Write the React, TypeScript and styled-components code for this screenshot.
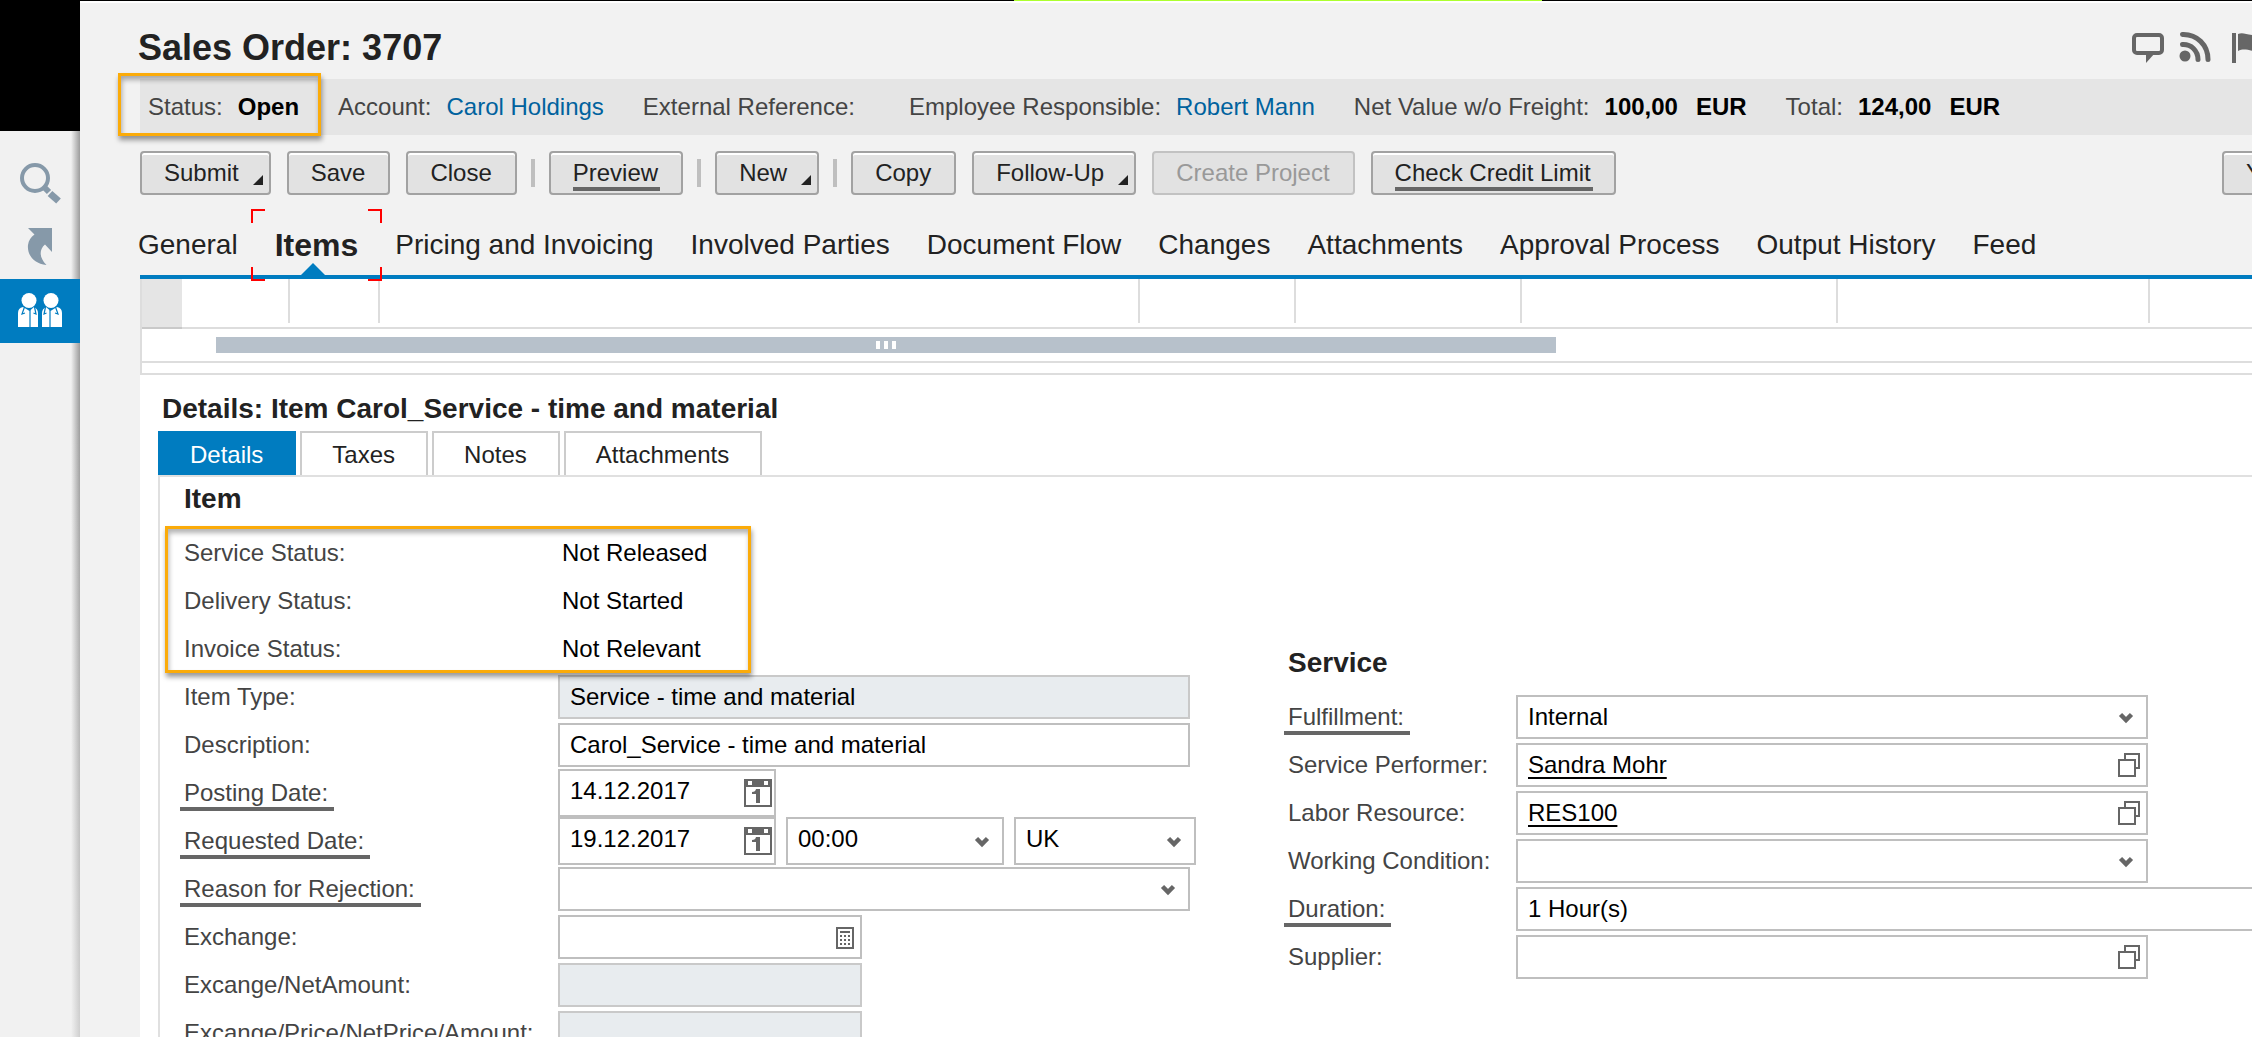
import React, { useState } from "react";
import styled, { createGlobalStyle, css } from "styled-components";

const GlobalStyle = createGlobalStyle`
  *, *::before, *::after { box-sizing: border-box; }
  html, body { margin: 0; padding: 0; background: #f2f2f2; }
  body, button, input, select {
    font-family: "Liberation Sans", Arial, Helvetica, sans-serif;
    font-size: 24px;
    line-height: 28px;
  }
`;

/* ---------- shell ---------- */

const Shell = styled.div`
  display: flex;
  flex-direction: column;
  height: 100vh;
  overflow: hidden;
  color: #222;
`;

const LoadStrip = styled.div`
  flex: none;
  display: grid;
  grid-template-columns: 1014fr 528fr 710fr;
  height: 1px;
  background: #000;
`;

const LoadProgress = styled.div`
  grid-column: 2;
  background: #adff2f;
`;

const Body = styled.div`
  flex: 1;
  display: flex;
  min-height: 0;
`;

const Sidebar = styled.nav`
  flex: none;
  display: flex;
  flex-direction: column;
  width: 80px;
  background:
    linear-gradient(to bottom, rgba(241, 241, 241, 0) 40%, rgba(241, 241, 241, 0.6) 100%),
    linear-gradient(to left, #9c9c9c, #f1f1f1 9px);
`;

const BrandBlock = styled.div`
  height: 130px;
  margin-bottom: 20px;
  background: #000;
`;

const SideButton = styled.button<{ $active?: boolean }>`
  display: flex;
  align-items: center;
  justify-content: center;
  height: 64px;
  padding: 0;
  border: 0;
  background: ${(p) => (p.$active ? "#007cc0" : "transparent")};
  cursor: pointer;
`;

const Main = styled.main`
  flex: 1;
  min-width: 0;
  display: flex;
  flex-direction: column;
  padding-left: 60px;
  border-top: 2px solid #fff;
  background: #f2f2f2;
  overflow: hidden;
`;

/* ---------- header ---------- */

const TitleBar = styled.header`
  flex: none;
  display: flex;
  justify-content: space-between;
  height: 76px;
  padding: 24px 0 0;
  margin-left: -2px;
`;

const PageTitle = styled.h1`
  margin: 0;
  font-size: 36px;
  line-height: 42px;
  font-weight: bold;
`;

const HeaderTools = styled.div`
  display: flex;
  gap: 18px;
  margin-right: -12px;
`;

const ToolButton = styled.button`
  flex: none;
  display: flex;
  width: 32px;
  height: 40px;
  padding: 4px 0 0;
  border: 0;
  background: none;
`;

const InfoBar = styled.section`
  flex: none;
  display: flex;
  align-items: center;
  gap: 39px;
  height: 56px;
  padding-left: 8px;
  background: #e5e5e5;
  white-space: nowrap;
`;

const InfoGroup = styled.div`
  position: relative;
  display: flex;
  gap: 15px;
  color: #444;
`;

const InfoLink = styled.a`
  color: #00629e;
  text-decoration: none;
`;

const InfoValue = styled.strong`
  color: #000;

  & + & { margin-left: 3px; }
`;

const Callout = styled.span<{ $box: "status" | "rows" }>`
  position: absolute;
  z-index: 2;
  border: 3px solid #fbab09;
  box-shadow: 1px 4px 5px rgba(0, 0, 0, 0.4), inset 1px 4px 5px rgba(0, 0, 0, 0.3);
  pointer-events: none;
  ${(p) =>
    p.$box === "status"
      ? css`
          inset: -20px -22px -15px -30px;
        `
      : css`
          top: -3px;
          left: -19px;
          width: 586px;
          bottom: 0;
        `}
`;

/* ---------- toolbar ---------- */

const Toolbar = styled.div`
  flex: none;
  display: flex;
  align-items: center;
  gap: 16px;
  padding-top: 16px;
  white-space: nowrap;
`;

const ActionButton = styled.button<{ $menu?: boolean; $offEdge?: boolean }>`
  position: relative;
  flex: none;
  height: 44px;
  padding: 0 ${(p) => (p.$menu ? 30 : 23)}px 0 22px;
  border: 2px solid #a2a2a2;
  border-radius: 4px;
  background: #e2e2e2;
  box-shadow: inset 0 2px 0 #fff;
  color: #222;
  cursor: pointer;
  ${(p) => p.$offEdge && "margin: 0 -35px 0 auto;"}

  &:disabled {
    border-color: #c2c2c2;
    box-shadow: none;
    color: #999;
    cursor: default;
  }
`;

const MenuCorner = styled.span`
  position: absolute;
  right: 6px;
  bottom: 8px;
  border-left: 10px solid transparent;
  border-bottom: 10px solid #222;
`;

const Marked = styled.span`
  display: block;
  margin: 0 -2px -4px 0;
  padding-right: 2px;
  border-bottom: 4px solid #666;
`;

const Divider = styled.span`
  width: 4px;
  height: 28px;
  margin: 0 -2px;
  background: #bfbfbf;
`;

/* ---------- work tabs ---------- */

const WorkTabs = styled.nav`
  flex: none;
  display: flex;
  align-items: center;
  gap: 37px;
  height: 84px;
  padding-top: 20px;
  border-bottom: 4px solid #007cc0;
  white-space: nowrap;
`;

const WorkTab = styled.button<{ $active?: boolean }>`
  position: relative;
  height: 60px;
  padding: 0;
  border: 0;
  background: none;
  color: #222;
  font-size: ${(p) => (p.$active ? 32 : 28)}px;
  font-weight: ${(p) => (p.$active ? "bold" : "normal")};
  line-height: 36px;
  cursor: pointer;

  &:first-child { margin-left: -2px; }
`;

const TabPointer = styled.span`
  position: absolute;
  bottom: 0;
  left: 26px;
  border: 12px solid transparent;
  border-top: 0;
  border-bottom-color: #007cc0;
`;

const FocusCorners = styled.span`
  position: absolute;
  inset: -6px -24px;
  --c: #f00;
  background:
    linear-gradient(var(--c) 0 0) 0 0 / 14px 2px,
    linear-gradient(var(--c) 0 0) 0 0 / 2px 14px,
    linear-gradient(var(--c) 0 0) 100% 0 / 14px 2px,
    linear-gradient(var(--c) 0 0) 100% 0 / 2px 14px,
    linear-gradient(var(--c) 0 0) 0 100% / 14px 2px,
    linear-gradient(var(--c) 0 0) 0 100% / 2px 14px,
    linear-gradient(var(--c) 0 0) 100% 100% / 14px 2px,
    linear-gradient(var(--c) 0 0) 100% 100% / 2px 14px;
  background-repeat: no-repeat;
`;

/* ---------- item list ---------- */

const Sheet = styled.div`
  flex: 1;
  display: flex;
  flex-direction: column;
  background: #fff;
`;

const ListFrame = styled.div`
  border-left: 2px solid #ddd;
  border-bottom: 2px solid #ddd;
`;

const ItemTable = styled.table`
  width: 100%;
  table-layout: fixed;
  border-spacing: 0;
`;

const ItemCell = styled.td<{ $width?: number }>`
  width: ${(p) => (p.$width ? `${p.$width}px` : "auto")};
  height: 50px;
  padding: 0;
  border-bottom: 2px solid #ddd;
  background: ${(p) => (p.$width ? "linear-gradient(#ddd, #ddd) right top / 2px 44px no-repeat" : "none")};
`;

const SelectorCell = styled.td`
  width: 40px;
  padding: 0;
  border-bottom: 2px solid #c9c9c9;
  background: #e5e5e5;
`;

const ScrollTrack = styled.div`
  height: 34px;
  padding: 8px 0 8px 74px;
  border-bottom: 2px solid #ddd;
  margin-bottom: 10px;
`;

const ScrollThumb = styled.div`
  display: flex;
  justify-content: center;
  align-items: center;
  gap: 4px;
  width: 66%;
  max-width: 1340px;
  height: 16px;
  background: #b7c1cb;
`;

const Grip = styled.span`
  width: 4px;
  height: 8px;
  background: #fff;
`;

/* ---------- details ---------- */

const DetailArea = styled.section`
  flex: 1;
  display: flex;
  flex-direction: column;
  padding: 18px 0 0 18px;
`;

const DetailTitle = styled.h2`
  margin: 0 0 6px 4px;
  font-size: 28px;
  line-height: 32px;
`;

const SubTabs = styled.div`
  display: flex;
  gap: 4px;
`;

const SubTab = styled.button<{ $active?: boolean }>`
  height: 44px;
  padding: ${(p) => (p.$active ? "4px 33px 0 32px" : "2px 31px 0 30px")};
  border: solid ${(p) => (p.$active ? "#007cc0" : "#ccc")};
  border-width: ${(p) => (p.$active ? "0" : "2px 2px 0")};
  background: ${(p) => (p.$active ? "#007cc0" : "#fff")};
  color: ${(p) => (p.$active ? "#fff" : "#222")};
  cursor: pointer;
`;

const Panel = styled.div`
  flex: 1;
  display: grid;
  grid-template-columns: minmax(0, 1104fr) minmax(0, 964fr);
  align-items: start;
  padding: 6px 0 0 24px;
  border-top: 2px solid #e0e0e0;
  border-left: 2px solid #e0e0e0;
`;

const FormColumn = styled.div<{ $lowered?: boolean }>`
  padding-top: ${(p) => (p.$lowered ? 164 : 0)}px;
`;

const FormHeading = styled.h3`
  margin: 0 0 14px;
  font-size: 28px;
  line-height: 32px;
`;

const StatusRows = styled.div`
  position: relative;
`;

const Row = styled.div<{ $narrow?: boolean }>`
  display: grid;
  grid-template-columns: ${(p) => (p.$narrow ? 228 : 374)}px minmax(0, 1fr);
  align-items: center;
  height: 48px;
`;

const FieldLabel = styled.label<{ $marked?: boolean }>`
  justify-self: start;
  color: #444;
  white-space: nowrap;
  ${(p) =>
    p.$marked &&
    css`
      margin: 0 0 -4px -4px;
      padding: 0 6px 0 4px;
      border-bottom: 4px solid #666;
    `}
`;

const StatusText = styled.output`
  padding-left: 4px;
  color: #000;
`;

const Controls = styled.div`
  display: flex;
  gap: 10px;
`;

type Size = "full" | "amount" | "date" | "zone" | "stretch";
const widths: Record<Size, string> = {
  full: "width: 632px;",
  amount: "width: 304px;",
  date: "width: 218px;",
  zone: "width: 182px;",
  stretch: "width: auto; margin-right: -2px;",
};

const FieldBox = styled.div<{ $size: Size }>`
  position: relative;
  ${(p) => widths[p.$size]}
`;

const fieldLook = css<{ $tall?: boolean }>`
  display: block;
  width: 100%;
  height: ${(p) => (p.$tall ? 48 : 44)}px;
  margin: 0;
  padding: 0 40px ${(p) => (p.$tall ? 4 : 0)}px 10px;
  border: 2px solid #bfbfbf;
  border-radius: 0;
  background: #fff;
  color: #000;
  outline: 0;
`;

const TextField = styled.input<{ $tall?: boolean; $linked?: boolean }>`
  ${fieldLook}
  ${(p) =>
    p.$linked &&
    "text-decoration: underline; text-decoration-thickness: 2px; text-underline-offset: 4px; text-decoration-skip-ink: none;"}

  &:read-only {
    border-color: #c9c9c9;
    background: #e8ecef;
  }
`;

const SelectField = styled.select<{ $tall?: boolean }>`
  ${fieldLook}
  appearance: none;
`;

const FieldIcon = styled.span<{ $right: number }>`
  position: absolute;
  top: 0;
  bottom: 0;
  right: ${(p) => p.$right}px;
  display: flex;
  align-items: center;
  pointer-events: none;
`;

const FieldButton = styled.button<{ $right: number }>`
  position: absolute;
  top: 0;
  bottom: 0;
  right: ${(p) => p.$right}px;
  display: flex;
  align-items: center;
  padding: 0;
  border: 0;
  background: none;
`;

/* ---------- icons ---------- */

const SearchIcon = () => (
  <svg width="46" height="46" viewBox="17 160 46 46" fill="none" stroke="#8699a9">
    <circle cx="35" cy="178" r="13" strokeWidth="4" />
    <path d="M44.500 187.500L49 192" strokeWidth="6" />
    <path d="M50 193.500L58.500 201" strokeWidth="7" />
  </svg>
);

const ShortcutIcon = () => (
  <svg width="40" height="42" viewBox="20 227 40 42" fill="#8699a9">
    <path d="M28 229H52V253L45 245.500C39.500 250 38.500 258 46.500 266C33 264.500 27 255 28 246C28.500 241.500 31 238 34.500 235.500Z" />
  </svg>
);

const PeopleIcon = () => (
  <svg width="46" height="38" viewBox="17 292 46 38">
    {["", "translate(80 0) scale(-1 1)"].map((side) => (
      <g key={side} transform={side}>
        <circle cx="29" cy="300.500" r="7.500" fill="#fff" />
        <path d="M18 327V313Q18 308 23 307L29.500 311L34 307Q38 309 38 313V327Z" fill="#fff" />
        <path d="M24.500 307L22 314L25 313M34.500 307L36 314L33.500 313M30 310V327" stroke="#007cc0" strokeWidth="1.200" fill="none" />
      </g>
    ))}
  </svg>
);

const CommentIcon = () => (
  <svg width="32" height="32" viewBox="0 0 32 32">
    <rect x="2" y="4" width="28" height="18" rx="3" fill="none" stroke="#666" strokeWidth="4" />
    <path d="M14 22V32L23 22Z" fill="#666" />
  </svg>
);

const FeedIcon = () => (
  <svg width="32" height="32" viewBox="2 0 32 32" fill="none" stroke="#666" strokeWidth="5" strokeLinecap="round" overflow="visible">
    <circle cx="5" cy="25" r="5.500" fill="#666" stroke="none" />
    <path d="M2.500 13.500C11 13 18 19.500 18 28.500M2.500 3.500C17 3 28 14 28 28.500" />
  </svg>
);

const FlagIcon = () => (
  <svg width="32" height="32" viewBox="0 0 32 32" fill="#666">
    <rect x="0" y="2" width="4" height="30" />
    <path d="M6 3C12 0 17 6 32 4V20C20 22 14 16 6 20Z" />
  </svg>
);

const Chevron = () => (
  <svg width="16" height="14" viewBox="0 0 16 14">
    <path d="M2.500 4.500L8 10L13.500 4.500" fill="none" stroke="#666" strokeWidth="4.500" />
  </svg>
);

const CalendarIcon = () => (
  <svg width="28" height="28" viewBox="0 0 28 28">
    <path d="M0 0H28V28H0ZM2 8V26H26V8ZM4 2V6H8V2ZM20 2V6H24V2Z" fill="#666" fillRule="evenodd" />
    <path d="M12 10H16V24H12V15H8V13Q11.500 13 12 10Z" fill="#666" />
  </svg>
);

const CalculatorIcon = () => (
  <svg width="18" height="24" viewBox="0 -2 18 24" fill="#666">
    <path d="M0 0H18V22H0ZM2 2V20H16V2Z" fillRule="evenodd" />
    <rect x="4" y="4" width="10" height="2" />
    {[8, 12, 16].map((y) => [4, 8, 12].map((x) => <rect key={`${x}-${y}`} x={x} y={y} width="2" height="2" />))}
  </svg>
);

const ValueHelpIcon = () => (
  <svg width="22" height="24" viewBox="0 0 22 24" fill="none" stroke="#666" strokeWidth="2">
    <path d="M7 6V1H21V15H18" />
    <rect x="1" y="7" width="16" height="16" />
  </svg>
);

/* ---------- fields ---------- */

type TextProps = { id: string; value?: string; size?: Size; readOnly?: boolean; linked?: boolean; kind?: "date" | "calc" | "help" };

const helpers = {
  date: { name: "Open calendar", right: 4, icon: <CalendarIcon /> },
  calc: { name: "Open calculator", right: 8, icon: <CalculatorIcon /> },
  help: { name: "Value help", right: 8, icon: <ValueHelpIcon /> },
};

function Text({ id, value = "", size = "full", readOnly, linked, kind }: TextProps) {
  const helper = kind && helpers[kind];
  return (
    <FieldBox $size={size}>
      <TextField id={id} defaultValue={value} readOnly={readOnly} $linked={linked} $tall={kind === "date"} />
      {helper && (
        <FieldButton type="button" aria-label={helper.name} $right={helper.right}>
          {helper.icon}
        </FieldButton>
      )}
    </FieldBox>
  );
}

function Choice({ id, value = "", size = "full", tall, name }: { id: string; value?: string; size?: Size; tall?: boolean; name?: string }) {
  return (
    <FieldBox $size={size}>
      <SelectField id={id} defaultValue={value} $tall={tall} aria-label={name}>
        <option value={value}>{value}</option>
      </SelectField>
      <FieldIcon $right={14}>
        <Chevron />
      </FieldIcon>
    </FieldBox>
  );
}

function Field({ id, label, marked, narrow, children }: { id: string; label: string; marked?: boolean; narrow?: boolean; children: React.ReactNode }) {
  return (
    <Row $narrow={narrow}>
      <FieldLabel htmlFor={id} $marked={marked}>{label}</FieldLabel>
      {children}
    </Row>
  );
}

const workTabs = [
  "General", "Items", "Pricing and Invoicing", "Involved Parties", "Document Flow", "Changes",
  "Attachments", "Approval Process", "Output History", "Feed",
];
const subTabs = ["Details", "Taxes", "Notes", "Attachments"];
const columnWidths = [108, 90, 760, 156, 226, 316, 312];

export default function App() {
  const [tab, setTab] = useState("Items");
  const [subTab, setSubTab] = useState("Details");

  return (
    <Shell>
      <GlobalStyle />
      <LoadStrip><LoadProgress /></LoadStrip>
      <Body>
        <Sidebar>
          <BrandBlock />
          <SideButton aria-label="Search"><SearchIcon /></SideButton>
          <SideButton aria-label="Shortcuts"><ShortcutIcon /></SideButton>
          <SideButton aria-label="People" $active><PeopleIcon /></SideButton>
        </Sidebar>
        <Main>
          <TitleBar>
            <PageTitle>Sales Order: 3707</PageTitle>
            <HeaderTools>
              <ToolButton aria-label="Comments"><CommentIcon /></ToolButton>
              <ToolButton aria-label="Subscribe"><FeedIcon /></ToolButton>
              <ToolButton aria-label="Flag"><FlagIcon /></ToolButton>
            </HeaderTools>
          </TitleBar>

          <InfoBar>
            <InfoGroup>
              <span>Status:</span>
              <InfoValue>Open</InfoValue>
              <Callout $box="status" />
            </InfoGroup>
            <InfoGroup>
              <span>Account:</span>
              <InfoLink href="#account">Carol Holdings</InfoLink>
            </InfoGroup>
            <InfoGroup>
              <span>External Reference:</span>
              <span />
            </InfoGroup>
            <InfoGroup>
              <span>Employee Responsible:</span>
              <InfoLink href="#employee">Robert Mann</InfoLink>
            </InfoGroup>
            <InfoGroup>
              <span>Net Value w/o Freight:</span>
              <InfoValue>100,00</InfoValue>
              <InfoValue>EUR</InfoValue>
            </InfoGroup>
            <InfoGroup>
              <span>Total:</span>
              <InfoValue>124,00</InfoValue>
              <InfoValue>EUR</InfoValue>
            </InfoGroup>
          </InfoBar>

          <Toolbar>
            <ActionButton $menu>Submit<MenuCorner /></ActionButton>
            <ActionButton>Save</ActionButton>
            <ActionButton>Close</ActionButton>
            <Divider />
            <ActionButton><Marked>Preview</Marked></ActionButton>
            <Divider />
            <ActionButton $menu>New<MenuCorner /></ActionButton>
            <Divider />
            <ActionButton>Copy</ActionButton>
            <ActionButton $menu>Follow-Up<MenuCorner /></ActionButton>
            <ActionButton disabled>Create Project</ActionButton>
            <ActionButton><Marked>Check Credit Limit</Marked></ActionButton>
            <ActionButton $offEdge>Y</ActionButton>
          </Toolbar>

          <WorkTabs>
            {workTabs.map((name) => (
              <WorkTab key={name} $active={name === tab} onClick={() => setTab(name)}>
                {name}
                {name === tab && (
                  <>
                    <TabPointer />
                    <FocusCorners />
                  </>
                )}
              </WorkTab>
            ))}
          </WorkTabs>

          <Sheet>
            <ListFrame>
              <ItemTable>
                <tbody>
                  <tr>
                    <SelectorCell />
                    {columnWidths.map((w, i) => <ItemCell key={i} $width={w} />)}
                    <ItemCell />
                  </tr>
                </tbody>
              </ItemTable>
              <ScrollTrack>
                <ScrollThumb><Grip /><Grip /><Grip /></ScrollThumb>
              </ScrollTrack>
            </ListFrame>

            <DetailArea>
              <DetailTitle>Details: Item Carol_Service - time and material</DetailTitle>
              <SubTabs>
                {subTabs.map((name) => (
                  <SubTab key={name} $active={name === subTab} onClick={() => setSubTab(name)}>{name}</SubTab>
                ))}
              </SubTabs>
              <Panel>
                <FormColumn>
                  <FormHeading>Item</FormHeading>
                  <StatusRows>
                    <Field id="service-status" label="Service Status:"><StatusText id="service-status">Not Released</StatusText></Field>
                    <Field id="delivery-status" label="Delivery Status:"><StatusText id="delivery-status">Not Started</StatusText></Field>
                    <Field id="invoice-status" label="Invoice Status:"><StatusText id="invoice-status">Not Relevant</StatusText></Field>
                    <Callout $box="rows" />
                  </StatusRows>
                  <Field id="item-type" label="Item Type:"><Text id="item-type" value="Service - time and material" readOnly /></Field>
                  <Field id="description" label="Description:"><Text id="description" value="Carol_Service - time and material" /></Field>
                  <Field id="posting" label="Posting Date:" marked><Text id="posting" value="14.12.2017" size="date" kind="date" /></Field>
                  <Field id="requested" label="Requested Date:" marked>
                    <Controls>
                      <Text id="requested" value="19.12.2017" size="date" kind="date" />
                      <Choice id="requested-time" name="Requested time" value="00:00" size="date" tall />
                      <Choice id="requested-zone" name="Time zone" value="UK" size="zone" tall />
                    </Controls>
                  </Field>
                  <Field id="rejection" label="Reason for Rejection:" marked><Choice id="rejection" /></Field>
                  <Field id="exchange" label="Exchange:"><Text id="exchange" size="amount" kind="calc" /></Field>
                  <Field id="net-amount" label="Excange/NetAmount:"><Text id="net-amount" size="amount" readOnly /></Field>
                  <Field id="net-price" label="Excange/Price/NetPrice/Amount:"><Text id="net-price" size="amount" readOnly /></Field>
                </FormColumn>

                <FormColumn $lowered>
                  <FormHeading>Service</FormHeading>
                  <Field narrow id="fulfillment" label="Fulfillment:" marked><Choice id="fulfillment" value="Internal" /></Field>
                  <Field narrow id="performer" label="Service Performer:"><Text id="performer" value="Sandra Mohr" kind="help" linked /></Field>
                  <Field narrow id="labor" label="Labor Resource:"><Text id="labor" value="RES100" kind="help" linked /></Field>
                  <Field narrow id="condition" label="Working Condition:"><Choice id="condition" /></Field>
                  <Field narrow id="duration" label="Duration:" marked><Text id="duration" value="1 Hour(s)" size="stretch" /></Field>
                  <Field narrow id="supplier" label="Supplier:"><Text id="supplier" kind="help" /></Field>
                </FormColumn>
              </Panel>
            </DetailArea>
          </Sheet>
        </Main>
      </Body>
    </Shell>
  );
}
